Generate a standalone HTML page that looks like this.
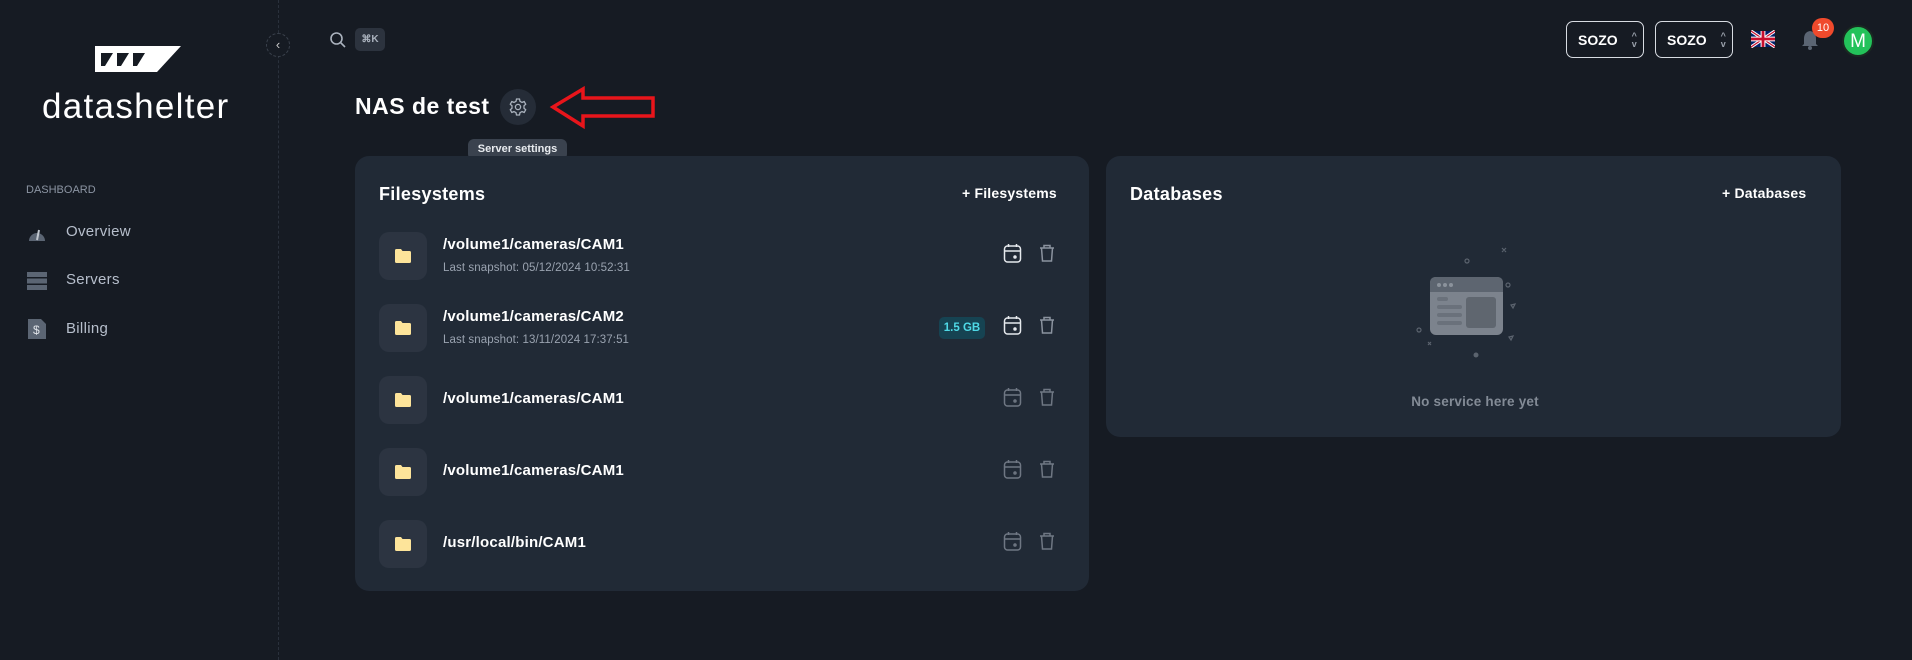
<!DOCTYPE html>
<html><head><meta charset="utf-8"><style>
*{box-sizing:border-box;margin:0;padding:0}
body{width:1912px;height:660px;background:#161b23;font-family:"Liberation Sans",sans-serif;color:#fff;position:relative;overflow:hidden}
.abs{position:absolute}
.divider{left:278px;top:0;height:660px;border-left:1px dashed #2a313c}
.nav{left:66px;font-size:15px;color:#b7bfcc;letter-spacing:0.3px}
.card{background:#212a36;border-radius:14px}
.folder{width:48px;height:48px;border-radius:10px;background:#2c3441;display:flex;align-items:center;justify-content:center}
.fname{font-size:15px;font-weight:bold;color:#fff;letter-spacing:0.2px}
.fsub{font-size:11.5px;color:#9aa3b0;letter-spacing:0.1px}
.sozo{height:37px;width:78px;border:1.5px solid #d8dce2;border-radius:7px;font-weight:bold;font-size:14px;display:flex;align-items:center;padding-left:11px}
</style></head><body>
<div class="abs divider"></div>
<!-- logo -->
<svg class="abs" style="left:95px;top:46px" width="86" height="26" viewBox="0 0 86 26">
<path d="M0 0H86L62 26H0Z" fill="#fff"/>
<path d="M6 7H18L10 20H6Z M22 7H34L26 20H22Z M38 7H50L42 20H38Z" fill="#161b23"/>
</svg>
<div class="abs" style="left:42px;top:87px;font-size:35px;color:#fff;letter-spacing:1.3px">datashelter</div>
<div class="abs" style="left:266px;top:33px;width:24px;height:24px;border-radius:50%;border:1px dashed #3a414c;background:#161b23;color:#ccc;font-size:13px;text-align:center;line-height:22px">‹</div>
<div class="abs" style="left:26px;top:184px;font-size:11px;color:#8c95a3">DASHBOARD</div>
<svg class="abs" style="left:27px;top:224px" width="20" height="18"><path d="M2 17A8 8 0 1 1 18 17Z" fill="#5b6573"/><path d="M10 16L12 6" stroke="#c0c6ce" stroke-width="2"/></svg>
<div class="abs nav" style="top:223px">Overview</div>
<svg class="abs" style="left:27px;top:272px" width="20" height="18"><rect y="0" width="20" height="5" fill="#5b6573"/><rect y="6.5" width="20" height="5" fill="#5b6573"/><rect y="13" width="20" height="5" fill="#5b6573"/></svg>
<div class="abs nav" style="top:271px">Servers</div>
<svg class="abs" style="left:28px;top:319px" width="18" height="20"><path d="M0 0H13L18 5V20H0Z" fill="#5b6573"/><text x="5" y="15" font-size="12" fill="#dfe3e8" font-family="Liberation Sans">$</text></svg>
<div class="abs nav" style="top:320px">Billing</div>

<!-- top search -->
<svg class="abs" style="left:329px;top:31px" width="18" height="18" fill="none" stroke="#aab2bd" stroke-width="1.6"><circle cx="7.5" cy="7.5" r="5.5"/><path d="M11.5 11.5L16 16"/></svg>
<div class="abs" style="left:355px;top:28px;width:30px;height:23px;border-radius:5px;background:#2c333e;color:#aab2bd;font-size:10px;font-weight:bold;text-align:center;line-height:23px">⌘K</div>

<!-- title -->
<div class="abs" style="left:355px;top:93px;font-size:23px;font-weight:bold;letter-spacing:0.5px">NAS de test</div>
<div class="abs" style="left:500px;top:89px;width:36px;height:36px;border-radius:50%;background:#252c37"></div>
<svg class="abs" style="left:508px;top:97px" width="20" height="20" fill="none" stroke="#aab2bd" stroke-width="1.3"><circle cx="10" cy="10" r="2.6"/><path d="M8.5 2H11.5L12 4.3L14 5.4L16.2 4.6L17.7 7.2L16 8.8V11.2L17.7 12.8L16.2 15.4L14 14.6L12 15.7L11.5 18H8.5L8 15.7L6 14.6L3.8 15.4L2.3 12.8L4 11.2V8.8L2.3 7.2L3.8 4.6L6 5.4L8 4.3Z"/></svg>
<svg class="abs" style="left:548px;top:86px" width="110" height="44" fill="none" stroke="#e8151b" stroke-width="3.5"><path d="M5 21L35 3V12H105V30H35V40Z"/></svg>
<div class="abs" style="left:468px;top:139px;width:99px;height:21px;border-radius:6px;background:#3a424e;font-size:11px;font-weight:bold;text-align:center;line-height:21px;color:#e8ebef">Server settings</div>

<!-- filesystems card -->
<div class="abs card" style="left:355px;top:156px;width:734px;height:435px"></div>
<div class="abs" style="left:379px;top:184px;font-size:18px;font-weight:bold;letter-spacing:0.3px">Filesystems</div>
<div class="abs" style="left:962px;top:185px;font-size:14px;font-weight:bold;letter-spacing:0.2px">+ Filesystems</div>

<div class="abs folder" style="left:379px;top:232px"><svg width="16" height="14"><path d="M0 1.5Q0 0 1.5 0H6L7.5 2H14.5Q16 2 16 3.5V12.5Q16 14 14.5 14H1.5Q0 14 0 12.5Z" fill="#fde49a"/></svg></div>
<div class="abs fname" style="left:443px;top:236px">/volume1/cameras/CAM1</div>
<div class="abs fsub" style="left:443px;top:262px">Last snapshot: 05/12/2024 10:52:31</div>

<div class="abs folder" style="left:379px;top:304px"><svg width="16" height="14"><path d="M0 1.5Q0 0 1.5 0H6L7.5 2H14.5Q16 2 16 3.5V12.5Q16 14 14.5 14H1.5Q0 14 0 12.5Z" fill="#fde49a"/></svg></div>
<div class="abs fname" style="left:443px;top:308px">/volume1/cameras/CAM2</div>
<div class="abs fsub" style="left:443px;top:334px">Last snapshot: 13/11/2024 17:37:51</div>
<div class="abs" style="left:939px;top:317px;width:46px;height:22px;border-radius:5px;background:#164352;color:#4fd9e6;font-size:11.5px;font-weight:bold;text-align:center;line-height:22px">1.5 GB</div>

<div class="abs folder" style="left:379px;top:376px"><svg width="16" height="14"><path d="M0 1.5Q0 0 1.5 0H6L7.5 2H14.5Q16 2 16 3.5V12.5Q16 14 14.5 14H1.5Q0 14 0 12.5Z" fill="#fde49a"/></svg></div>
<div class="abs fname" style="left:443px;top:390px">/volume1/cameras/CAM1</div>

<div class="abs folder" style="left:379px;top:448px"><svg width="16" height="14"><path d="M0 1.5Q0 0 1.5 0H6L7.5 2H14.5Q16 2 16 3.5V12.5Q16 14 14.5 14H1.5Q0 14 0 12.5Z" fill="#fde49a"/></svg></div>
<div class="abs fname" style="left:443px;top:462px">/volume1/cameras/CAM1</div>

<div class="abs folder" style="left:379px;top:520px"><svg width="16" height="14"><path d="M0 1.5Q0 0 1.5 0H6L7.5 2H14.5Q16 2 16 3.5V12.5Q16 14 14.5 14H1.5Q0 14 0 12.5Z" fill="#fde49a"/></svg></div>
<div class="abs fname" style="left:443px;top:534px">/usr/local/bin/CAM1</div>

<!-- action icons -->
<svg class="abs" style="left:1000px;top:240px" width="60" height="340" fill="none" stroke-width="1.5">
<g><g stroke="#e6e9ed"><rect x="4.5" y="6" width="16" height="16" rx="3"/><path d="M4.5 11H20.5M8.5 4V7M16.5 4V7"/><circle cx="15" cy="17" r="1" fill="#e6e9ed"/></g><g stroke="#8b939f"><path d="M40 8H54M44 8V5.5H50V8M41.5 8L42.5 21H51.5L52.5 8"/></g></g>
<g transform="translate(0,72)"><g stroke="#e6e9ed"><rect x="4.5" y="6" width="16" height="16" rx="3"/><path d="M4.5 11H20.5M8.5 4V7M16.5 4V7"/><circle cx="15" cy="17" r="1" fill="#e6e9ed"/></g><g stroke="#8b939f"><path d="M40 8H54M44 8V5.5H50V8M41.5 8L42.5 21H51.5L52.5 8"/></g></g>
<g transform="translate(0,144)" stroke="#6f7783"><rect x="4.5" y="6" width="16" height="16" rx="3"/><path d="M4.5 11H20.5M8.5 4V7M16.5 4V7"/><circle cx="15" cy="17" r="1"/><path d="M40 8H54M44 8V5.5H50V8M41.5 8L42.5 21H51.5L52.5 8"/></g>
<g transform="translate(0,216)" stroke="#6f7783"><rect x="4.5" y="6" width="16" height="16" rx="3"/><path d="M4.5 11H20.5M8.5 4V7M16.5 4V7"/><circle cx="15" cy="17" r="1"/><path d="M40 8H54M44 8V5.5H50V8M41.5 8L42.5 21H51.5L52.5 8"/></g>
<g transform="translate(0,288)" stroke="#6f7783"><rect x="4.5" y="6" width="16" height="16" rx="3"/><path d="M4.5 11H20.5M8.5 4V7M16.5 4V7"/><circle cx="15" cy="17" r="1"/><path d="M40 8H54M44 8V5.5H50V8M41.5 8L42.5 21H51.5L52.5 8"/></g>
</svg>

<!-- databases card -->
<div class="abs card" style="left:1106px;top:156px;width:735px;height:281px"></div>
<div class="abs" style="left:1130px;top:184px;font-size:18px;font-weight:bold;letter-spacing:0.3px">Databases</div>
<div class="abs" style="left:1722px;top:185px;font-size:14px;font-weight:bold;letter-spacing:0.2px">+ Databases</div>
<svg class="abs" style="left:1400px;top:240px" width="150" height="150">
<rect x="30" y="37" width="73" height="58" rx="6" fill="#7c838d"/>
<path d="M30 52V43Q30 37 36 37H97Q103 37 103 43V52Z" fill="#5d6570"/>
<circle cx="39" cy="45" r="2" fill="#8b929b"/><circle cx="45" cy="45" r="2" fill="#8b929b"/><circle cx="51" cy="45" r="2" fill="#8b929b"/>
<rect x="37" y="57" width="11" height="4" rx="2" fill="#6a717b"/><rect x="37" y="65" width="25" height="4" rx="2" fill="#6a717b"/><rect x="37" y="73" width="25" height="4" rx="2" fill="#6a717b"/><rect x="37" y="81" width="25" height="4" rx="2" fill="#6a717b"/>
<rect x="66" y="57" width="30" height="31" rx="3" fill="#5f666f"/>
<g fill="none" stroke="#5b636e" stroke-width="1.2"><circle cx="67" cy="21" r="2"/><circle cx="108" cy="45" r="2"/><circle cx="19" cy="90" r="2"/><path d="M111 65L115 64L113 68Z M109 97L113 96L111 100Z M102 8L106 12M106 8L102 12 M28 102L31 105M31 102L28 105"/></g>
<circle cx="76" cy="115" r="2.5" fill="#5b636e"/>
</svg>
<div class="abs" style="left:1400px;top:394px;width:150px;text-align:center;font-size:13.5px;font-weight:bold;color:#838b96;letter-spacing:0.2px">No service here yet</div>

<!-- header right -->
<div class="abs sozo" style="left:1566px;top:21px">SOZO<span style="margin-left:14px;color:#9aa1ab;font-size:9px;line-height:8px;display:inline-block;text-align:center">^<br>v</span></div>
<div class="abs sozo" style="left:1655px;top:21px">SOZO<span style="margin-left:14px;color:#9aa1ab;font-size:9px;line-height:8px;display:inline-block;text-align:center">^<br>v</span></div>
<svg class="abs" style="left:1751px;top:30px" width="24" height="18" viewBox="0 0 60 40">
<rect width="60" height="40" fill="#012169"/><path d="M0 0L60 40M60 0L0 40" stroke="#fff" stroke-width="8"/><path d="M0 0L60 40M60 0L0 40" stroke="#C8102E" stroke-width="3"/><path d="M30 0V40M0 20H60" stroke="#fff" stroke-width="12"/><path d="M30 0V40M0 20H60" stroke="#C8102E" stroke-width="7"/></svg>
<svg class="abs" style="left:1801px;top:29px" width="18" height="22"><path d="M9 2Q3 3 3 10V15L1 17H17L15 15V10Q15 3 9 2Z" fill="#5b6573"/><circle cx="9" cy="19" r="2" fill="#5b6573"/></svg>
<div class="abs" style="left:1812px;top:18px;width:22px;height:20px;border-radius:10px;background:#f04a2c;font-size:11px;text-align:center;line-height:20px">10</div>
<div class="abs" style="left:1842px;top:25px;width:32px;height:32px;border-radius:50%;background:#23c25a;border:2px solid #1a2a22;font-size:19px;text-align:center;line-height:29px">M</div>
</body></html>
